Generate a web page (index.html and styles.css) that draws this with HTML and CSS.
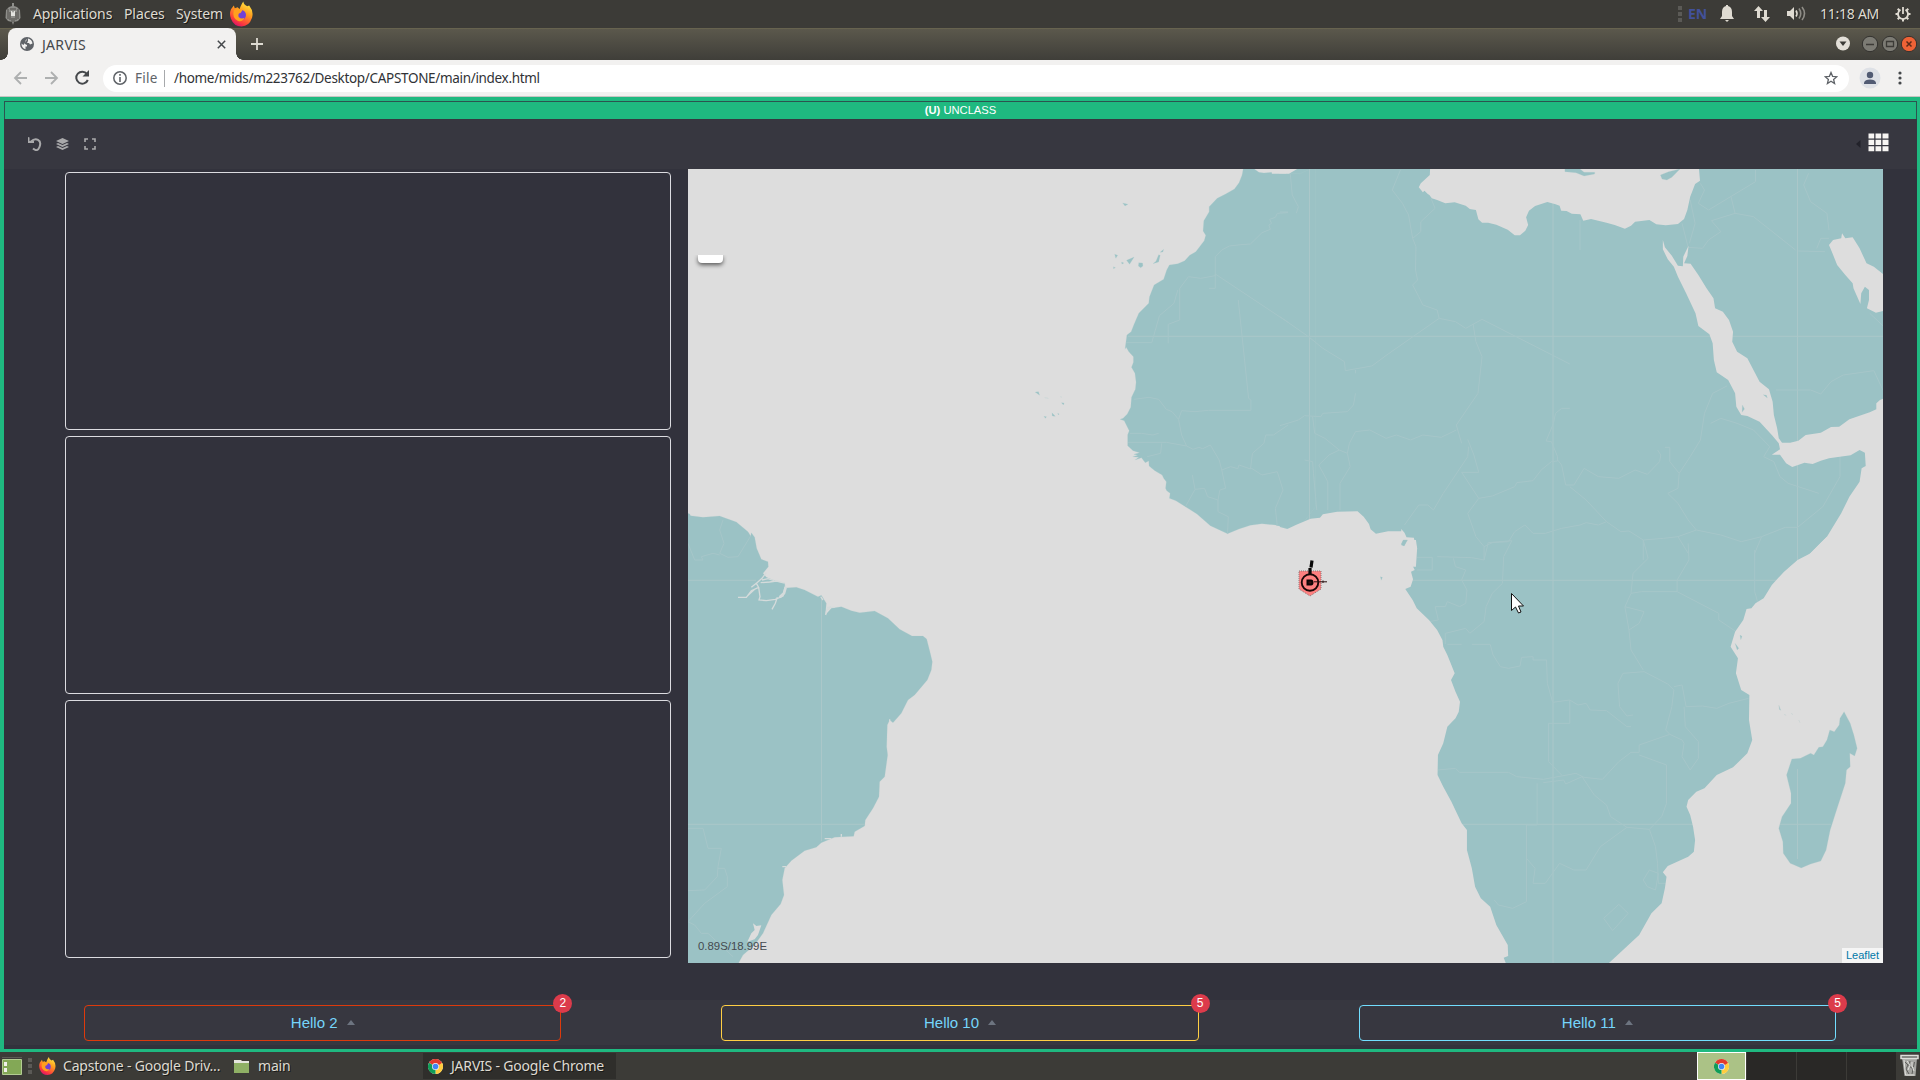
FILE: index.html
```html
<!DOCTYPE html>
<html lang="en">
<head>
<meta charset="utf-8">
<title>JARVIS</title>
<link rel="stylesheet" href="styles.css">
</head>
<body>
<svg width="0" height="0" class="defs">
  <defs>
    <linearGradient id="fox" x1="0.8" y1="0" x2="0.3" y2="1"><stop offset="0" stop-color="#fff14a"/><stop offset=".4" stop-color="#ffa01e"/><stop offset=".8" stop-color="#fc3c3c"/><stop offset="1" stop-color="#d9106d"/></linearGradient>
    <symbol id="firefox" viewBox="0 0 24 26">
      <path fill="url(#fox)" d="M1 8 4 4l1 3 3-1 2 2q2-6 4-8 0 3 4 5l2-1q5 6 3 13-3 9-11 9T1 18Q-1 13 1 8z"/>
      <circle cx="11.5" cy="14" r="5.2" fill="#7141d6"/>
      <path fill="#ffa01e" d="M4 9q4-3 9 0l-2 3q-3 0-2 4 3 3 6 1-2 5-7 3-6-3-4-11z"/>
    </symbol>
    <symbol id="chrome" viewBox="0 0 24 24">
      <circle cx="12" cy="12" r="12" fill="#fff"/>
      <path fill="#e33b2e" d="M12 12 1.600 6A12 12 0 0 1 22.400 6z"/>
      <path fill="#ffcd40" d="M12 12 22.400 6A12 12 0 0 1 12 24z"/>
      <path fill="#109d58" d="M12 12v12A12 12 0 0 1 1.600 6z"/>
      <path fill="#e33b2e" d="M12 6h10.400L17 10z"/>
      <circle cx="12" cy="12" r="5.600" fill="#f3f3f3"/><circle cx="12" cy="12" r="4.500" fill="#4285f4"/>
    </symbol>
  </defs>
</svg>

<div class="panel">
  <svg class="crest" width="16" height="22" viewBox="0 0 16 22"><path fill="#8e8e8a" d="M7 0h2v3l3 1 3 3 .5 8-2.500 3-4 1-1 3-1-3-4-1L.5 15 1 7l3-3 3-1z"/><path d="M3 6v10M13 6v10M5 9v8M11 9v8M7 15v4M9 15v4M5 6h6" stroke="#4e4d49" fill="none"/><path d="M6 8h1l1 2 1-2h1v5H6z" fill="#e4e4e0"/></svg>
  <span class="m1">Applications</span><span class="m2">Places</span><span class="m3">System</span>
  <svg class="ff" width="23" height="26"><use href="#firefox"/></svg>
  <div class="tray">
    <i class="grip"></i><b class="lang">EN</b>
    <svg class="bell" width="14" height="17" viewBox="0 0 14 17"><path fill="#dfdbd2" d="M6 1V0h2v1q4 1 4 6v4l2 3H0l2-3V7q0-5 4-6zM5 15h4l-2 2z"/></svg>
    <svg class="net" width="16" height="16" viewBox="0 0 16 16"><path fill="#dfdbd2" d="M4.500 0 9 5H6v7H3V5H0zM11.500 16 7 11h3V4h3v7h3z"/></svg>
    <svg class="vol" width="19" height="15" viewBox="0 0 19 15"><path fill="#dfdbd2" d="M0 5h3l4-4v13l-4-4H0z"/><path fill="none" stroke="#dfdbd2" stroke-width="1.600" d="M9 4.500q2 3 0 6"/><path fill="none" stroke="#8f8d87" stroke-width="1.600" d="M12 2.500q3.500 5 0 10M15 1q5 6.500 0 13"/></svg>
    <span class="clock">11:18 AM</span>
    <svg class="gear" width="16" height="16" viewBox="0 0 16 16"><path stroke="#dfdbd2" stroke-width="2" d="M12.500 8h3M.500 8h3M8 12.500v3M2.700 2.700l2 2M11.300 11.300l2 2M13.300 2.700l-2 2M4.700 11.300l-2 2"/><path fill="none" stroke="#dfdbd2" stroke-width="1.800" d="M5.500 3.700a5 5 0 1 0 5 0"/><path stroke="#dfdbd2" stroke-width="1.800" d="M8 1v7"/></svg>
  </div>
</div>

<div class="tabs">
  <div class="tab">
    <svg width="14" height="14" viewBox="0 0 14 14"><circle cx="7" cy="7" r="7" fill="#5f6368"/><path fill="#f2f1f0" d="M7.500 1.500 5.500 3.500v2L4 6.500 7 8v1.500H5.500v2.800Q1.500 11 1.500 7l-.1-.6 2 1.600L5 6M8 1.500q4 1 4.500 5L10 7.500 9 6H7l1-2z"/></svg>
    <span>JARVIS</span>
    <svg class="x" width="9" height="9" viewBox="0 0 9 9"><path stroke="#45484b" stroke-width="1.500" d="m.8.8 7.400 7.400m0-7.400L.8 8.200"/></svg>
  </div>
  <svg class="plus" width="12" height="12"><path stroke="#dedbd2" stroke-width="1.800" d="M6 0v12M0 6h12"/></svg>
  <svg class="wins" width="82" height="18" viewBox="0 0 82 18">
    <circle cx="7" cy="8.500" r="7" fill="#e3dfd8"/><path d="M3.500 6.500h7L7 11z" fill="#3c3b37"/>
    <circle cx="34" cy="9" r="7.700" fill="#7c7b74" stroke="#32312e"/><path stroke="#3c3b37" stroke-width="1.500" d="M30 9.500h8"/>
    <circle cx="54" cy="9" r="7.700" fill="#7c7b74" stroke="#32312e"/><path fill="none" stroke="#3c3b37" stroke-width="1.300" d="M50.500 6.500h7v5h-7z"/>
    <circle cx="73" cy="9" r="7.700" fill="#ee6236" stroke="#32312e"/><path stroke="#5d2a18" stroke-width="1.500" d="m70.500 6.500 5 5m0-5-5 5"/>
  </svg>
</div>

<div class="bar">
  <svg width="90" height="36" viewBox="0 0 90 36" fill="none" stroke-width="1.800"><path stroke="#aeb0b0" d="M27 18H15m6-6-6 6 6 6M45 18h12m-6-6 6 6-6 6"/><path stroke="#45484b" stroke-width="2" d="M87 14a6 6 0 1 0 .8 6"/><path fill="#45484b" d="M89 10v6.500h-6.500z"/></svg>
  <div class="url">
    <svg width="14" height="14" viewBox="0 0 14 14"><circle cx="7" cy="7" r="6.200" fill="none" stroke="#5f6368" stroke-width="1.500"/><path stroke="#5f6368" stroke-width="1.600" d="M7 6v5M7 3v1.700"/></svg>
    <span class="file">File</span><span class="path">/home/mids/m223762/Desktop/CAPSTONE/main/index.html</span>
    <svg class="star" width="14" height="14" viewBox="0 0 14 14"><path fill="none" stroke="#5f6368" stroke-width="1.300" d="m7 1.500 1.600 3.800 4.200.4-3.200 2.700 1 4.100L7 10.300l-3.600 2.200 1-4.100L1.200 5.700l4.200-.4z"/></svg>
  </div>
  <svg class="user" width="22" height="22" viewBox="0 0 22 22"><circle cx="11" cy="11" r="10.500" fill="#dee1e6"/><circle cx="11" cy="8" r="3.200" fill="#515b73"/><path fill="#515b73" d="M5 17v-1.500q1-3 6-3t6 3V17z"/></svg>
  <svg class="dots" width="4" height="14" fill="#45484b"><circle cx="2" cy="2" r="1.600"/><circle cx="2" cy="7" r="1.600"/><circle cx="2" cy="12" r="1.600"/></svg>
</div>

<div class="page">
  <div class="banner"><b>(U)</b> UNCLASS</div>
  <div class="tools">
    <svg width="72" height="14" viewBox="0 0 72 14">
      <path fill="none" stroke="#a9a9ab" stroke-width="2" d="M3 4.500Q6.500 1 10 2.800T11.500 10 5 11.500"/><path fill="#a9a9ab" d="M0 0 1.500.500v3.500H6V6H0z"/>
      <path fill="#a9a9ab" d="m34.500 1 6.500 3-6.500 3L28 4zM28 7l2-1 4.500 2L39 6l2 1-6.500 3zM28 10l2-1 4.500 2L39 9l2 1-6.500 3z"/>
      <path fill="none" stroke="#a9a9ab" stroke-width="1.600" d="M57 5V2h3M64 2h3v3M67 9v3h-3M60 12h-3V9"/>
    </svg>
    <svg class="apps" width="34" height="20" viewBox="0 0 34 20"><path fill="#22222a" d="M4.500 7v8L0 11z"/><path fill="#f7f5f3" d="M12.500.500h5.700v5h-5.700zM19.500.500h5.700v5h-5.700zM26.500.500h6v5h-6zM12.500 6.800h5.700v5.200h-5.700zM19.500 6.800h5.700v5.200h-5.700zM26.500 6.800h6v5.200h-6zM12.500 13.200h5.700v5h-5.700zM19.500 13.200h5.700v5h-5.700zM26.500 13.200h6v5h-6z"/></svg>
  </div>
  <div class="main">
    <div class="cards"><div class="card"></div><div class="card"></div><div class="card"></div></div>
    <div class="map">
      <svg width="1195" height="794" viewBox="0 0 1195 794">
        <path class="plain" d="M598 10V0H1195V794H592V300z"/>
        <g class="land">
          <g transform="translate(0 -9) scale(.38265 .33333)">
            <path d="M1452 20 1448 45 1440 68 1428 87 1405 102 1383 115 1362 140 1362 155 1348 182 1346 213 1353 226 1349 242 1327 275 1311 286 1298 302 1280 311 1258 315 1251 330 1243 358 1218 375 1206 410 1204 430 1178 460 1166 492 1158 515 1147 525 1142 568 1145 562 1152 575 1164 590 1164 607 1159 622 1168 640 1171 667 1169 688 1159 712 1157 742 1148 762 1137 775 1129 778 1140 782 1153 812 1149 824 1149 857 1163 872 1180 878 1165 883 1175 886 1162 890 1178 892 1168 900 1185 893 1195 908 1204 903 1205 918 1212 925 1220 932 1239 945 1243 955 1250 965 1248 985 1251 992 1260 1000 1258 1015 1275 1022 1300 1040 1330 1062 1365 1097 1410 1121 1440 1107 1470 1096 1500 1091 1535 1095 1568 1106 1600 1100 1640 1040 1640 20 1600 41 1545 40 1540 30 1537 36 1505 39 1492 37 1480 27V20z"/>
            <path d="m1136 129 14 4-8 5zM1115 283l8 3-5 9zM1112 320l5 3-5 3zM1133 306l6 3-5 4zM1146 301l20-10-12 22zM1178 308l10 1 1 9-6 5-6-5zM1215 311l8-7 7-20 4 2-4 20zM1234 277l9-9-2 8zM907 696l9-1 3 11zM932 713l10 2zM976 728l7 1-2 6zM951 758l9 11-8-1zM930 769l7 1-3 5zM966 760l4 2-2 3zM974 708l2 5z"/>
          </g>
          <path transform="translate(0 331) scale(.33333)" d="M-5 38 5 42 8 47 45 52 95 48 145 66 180 95 188 108 190 98 200 112 206 145 220 178 240 185 241 200 225 220 235 232 262 243 290 250 292 264 325 262 350 270 390 290 400 286 415 310 412 345 430 325 460 320 490 332 515 338 560 333 600 355 635 388 672 408 705 408 716 417 727 460 733 485 730 510 718 540 680 585 660 600 640 640 615 668 605 660 598 675 596 740 599 765 590 830 575 845 573 890 555 925 532 960 530 978 500 995 497 1009 440 1012 400 1028 385 1042 350 1052 310 1082 290 1105 283 1140 288 1185 278 1212 250 1245 225 1300 200 1335 165 1365 150 1392H-5z"/>
        </g>
        <g class="grid"><path d="M133.500 428V672M0 411.300H68M0 655.300H177M440 167.300H1195M621.500 0V360M865 0V794M1109.500 0V794M700 411.300H1100M740 655.300H1160"/></g>
        <g class="borders">
          <path transform="translate(0 -9) scale(.38265 .33333)" d="M1568 158 1540 160 1535 172 1520 178 1525 190 1518 195 1522 208 1500 218 1470 252 1445 254 1415 258 1395 270 1378 290V385H1362M1568 487 1378 342 1378 347 1340 355 1308 350 1285 385V480L1255 493V550M1280 390 1270 430 1232 467 1212 548H1145M1438 420 1465 715 1471 720V751H1360L1325 755 1290 752 1282 778 1265 755 1250 748 1230 718 1205 712 1165 718M1282 778 1290 825 1303 858 1250 847H1150M1155 820 1185 820 1215 825 1230 820M1303 858 1320 868 1335 862 1345 866 1365 855 1388 900 1395 930 1418 920 1437 926 1440 915 1470 927 1475 880 1505 850 1510 825 1530 825 1568 795M1395 930 1405 985 1390 990 1385 1020 1358 1010 1350 985 1325 988 1318 945M1238 850 1235 880 1200 890M1385 1020 1385 1055 1412 1070 1410 1120M1325 988 1300 1040M1470 923 1500 945 1540 935 1555 990 1535 1045 1540 1098"/>
          <path transform="translate(592 -9) scale(.40816 .33333)" d="M0 470 72 532 105 565 158 605 160 632 225 618 265 582 390 475 385 450 350 435 340 410 325 375 337 360 332 330 333 260 325 235 315 165 300 130 275 90 295 30M325 235 345 215 345 185 380 145 370 115M390 475 430 485 455 505 495 478 710 612M473 492 480 545 495 590 485 700 432 795 445 850M460 838 475 885 487 937H445L487 1015M462 860 460 890 430 945 400 1000 376 1050 362 1035 340 1035 305 1095M185 630V640M185 700 180 735 165 755 105 760 100 770 60 767 45 780 0 797M80 770 85 820 110 835 145 870 165 880 170 850 185 815 220 810 260 835 285 825 320 840 350 825 395 832 432 810M145 870 120 885 95 915 117 965V1050M165 880 172 920 147 970V1050M60 900 80 905 82 940 90 1050M487 1015 460 1060 480 1130 500 1160V1200M487 1015 520 1008 575 980 580 968 620 962 640 930 665 905 680 903 680 890 665 845 652 843 670 790 675 760 690 745H710M680 900 690 915 700 975 720 975 745 925 780 950 830 955 870 930 900 943 930 905 933 885 925 870M943 862 955 862V905L978 940 975 985 950 1000 975 1030 1000 1080 1020 1110 1080 1125 1130 1145 1180 1130 1238 1102H1268L1330 1040 1372 950V885M978 940 1005 890 1030 840 1040 760 1060 700 1095 678M1055 790 1080 775 1120 790 1160 810 1200 860 1185 890 1210 905 1225 950 1245 970 1320 1000M710 980 750 1020 800 1085 780 1095 750 1088 735 1095 690 1105 650 1120 620 1120 600 1095 575 1115 560 1145 520 1148 500 1160M800 1085 835 1115 855 1113 890 1140 940 1135 975 1130 1020 1110M890 1140 890 1200M975 1130 1000 1180M1180 1130 1163 1180V1200M735 180V270M985 190 1000 262 1035 265 1050 240 1080 215 1057 182 1115 160 1105 110M1005 120 1017 190 1003 250M1115 160 1160 170 1263 270M1270 273 1335 275M1315 265 1325 235 1345 235M1030 70 1040 90 1025 130 1050 150 1165 65V30M1295 40 1283 75 1300 125 1340 160 1345 210M1445 460 1477 497M1215 690 1300 690 1325 702 1350 665 1380 645 1455 632 1477 690M25 40 30 105 45 140 40 160M20 156H0"/>
          <path transform="translate(592 371) scale(.40816 .33333)" d="M335 52H373V90H335M385 50 470 53 500 60 510 8 568 2M568 2 548 50 545 130 520 160 505 200 500 245 465 280 455 265 405 280V312M425 55 430 80 455 90 445 120 458 150 455 190 440 200 410 185 405 200 380 200 388 240 365 245M410 313H445M470 313H515L522 345 540 380 560 385 588 378 592 352 620 350V360H653L655 430 668 487 710 480 730 495 750 490 760 510 800 512 850 560H860M710 480V550H658V665L690 705M386 690 430 685 440 697H560L580 710 645 718 725 700 745 712 790 718 830 665 860 637 880 637 880 615 955 583 945 570 960 500 965 450 950 432 892 395 840 400 828 430 832 500 850 528 865 525M890 0 902 55 865 100 860 160 845 200 855 270 860 330 890 390M1000 10 1002 60 973 120V155L1075 220V240L1115 273M860 160 885 155H973M855 270 880 250 892 215 845 200M965 440 985 435 995 500 1035 498 1070 505 1100 490 1148 475M990 500 993 560 1025 605V655L1005 690 985 650 990 610 985 600 955 583M880 645 947 675V790L935 830 905 868 850 862 810 830 800 795 770 765 740 710M645 728 695 720 700 732 740 710M630 730V855H604V1085L570 1105 535 1095 525 1080M604 955 625 985 620 1030H650L685 970 720 990 750 990 785 920 850 862M905 868 920 920 925 970 927 1030H945M905 990 890 1020 900 1040 920 1050 927 1000zM830 1093 853 1120 815 1172 793 1135zM1163 30V155L1170 185"/>
          <path transform="translate(0 331) scale(.33333)" d="M105 60 95 90 108 130 95 160 120 172 150 170 188 108M0 130 20 180H45L40 170 75 160 95 165M0 985H45L60 1045 100 1045 90 1100 88 1130 50 1170 0 1172M90 1105 110 1105 118 1130 118 1160 50 1210 0 1265 20 1275 40 1300 60 1300 135 1370"/>
        </g>
        <g class="sea">
          <g transform="translate(592 -9) scale(.40816 .33333)">
            <path d="M-20 20V41H22L42 27V20zM368 20 367 45 345 70 340 82 350 97 354 92 362 102 366 105 372 115 385 120 405 130 428 127 455 137 465 147 480 150 486 178 495 188 510 188 530 194 558 209 575 226 588 226 601 212 608 195 603 172 610 152 625 138 655 126 675 133 685 137 689 152 702 153 715 161 736 163 743 182 762 177 800 188 820 195 845 206 860 197 870 185 905 180 922 193 945 196 975 192 990 177 998 150 1005 110 1017 72 1029 62 1026 20z"/>
            <path d="M938 240 943 262 960 287 975 317 987 319 988 290 1001 257 998 288 990 310 1006 311 1025 345 1045 385 1062 415 1066 445 1085 455 1100 480 1110 515 1108 545 1120 575 1145 595 1160 630 1175 665 1198 688 1207 725 1210 765 1218 805 1222 835 1230 848 1250 848 1270 842 1288 825 1325 818 1350 801 1370 800 1395 778 1445 757 1461 748 1461 730 1470 720 1480 715V1220H1250L1275 1200 1295 1185 1340 1130 1375 1060 1395 1010 1420 965 1425 925 1435 918 1433 878 1420 870 1398 886 1345 895 1325 902 1305 912 1285 908 1255 921 1240 910 1225 884 1205 884 1225 868 1222 850 1205 825 1175 785 1145 768 1130 765 1118 740 1115 700 1098 660 1070 637 1063 600 1060 550 1052 523 1025 498 1018 460 995 400 975 350 965 320 950 298 938 268z"/>
            <path d="M1345 255 1355 240 1375 235 1377 220 1385 235 1403 232 1420 265 1437 310 1455 320 1480 345V452L1460 458 1438 445 1443 420 1443 390 1433 380 1424 400 1422 432 1405 385 1403 370 1385 345 1365 315 1352 275z"/>
            <path d="M-20 1095 0 1101 18 1107 40 1094 75 1076 98 1073 105 1063 140 1055 190 1054 205 1070 218 1092 222 1108 235 1121 265 1114 297 1114 297 1107 305 1118 310 1132 328 1133 330 1145 336 1165 333 1220H-20z"/>
          </g>
          <g transform="translate(592 371) scale(.40816 .33333)">
            <path d="M-20 0H333L336 25 328 60 322 70 330 90 321 95 326 118 320 140 307 147 325 180 335 205 365 240 385 270 398 300 400 320 410 345 428 400 419 420 430 455 441 485 438 515 430 535 410 560 400 610 387 645 386 705 400 740 420 785 445 850 458 870 458 930 470 985 478 1040 492 1075 515 1100 530 1155 558 1215 559 1248 548 1253 555 1275H-20z"/>
            <path d="M1480-10H1340L1325 8 1300 40 1268 60 1235 95 1205 135 1185 175 1165 190 1155 205 1143 207 1135 240 1115 275 1104 320 1122 355 1117 400 1130 450 1150 465 1149 540 1157 600 1145 640 1110 682 1070 705 1040 745 1020 755 1000 780 996 800 1005 825 1012 860 1017 900 1014 935 1000 950 950 978 938 997 947 1010 943 1045 935 1090 910 1120 880 1185 845 1225 805 1270 800 1290H1480z"/>
          </g>
          <path transform="translate(0 331) scale(.33333)" d="M195 1270 205 1278 220 1276 210 1305 200 1318 178 1325 190 1300 200 1290z"/>
        </g>
        <g class="land">
          <g transform="translate(592 371) scale(.40816 .33333)">
            <path d="M1382 515 1397 550 1406 585 1414 625 1408 648 1396 640 1397 680 1388 690 1385 730 1365 805 1348 870 1338 930 1325 963 1300 972 1277 984 1250 970 1233 940 1232 905 1222 865 1230 830 1252 790 1252 760 1241 705 1254 657 1275 655 1300 640 1308 645 1320 622 1330 620 1340 600 1347 570 1358 575 1370 555 1372 535zM302 0 312 0 304 18 297 12zM246 110l5 2-3 9zM1127 285l5 4-3 10zM1115 310l9 15-4 5zM1222 496l5 15-3-2zM1235 523l5 3zM1252 520l5 4zM1271 540l3 8z"/>
          </g>
          <g transform="translate(592 -9) scale(.40816 .33333)">
            <path d="M698 20V35L725 38 745 48 771 42V37H745L735 27V20zM932 45 952 35 980 27 960 52 948 60 936 57zM297 1155 302 1140 312 1140 304 1158zM1184 704l8 2 2 8zM1133 735l5 12-6 10z"/>
          </g>
        </g>
        <g class="grid"><path d="M1109.500 600V690M1092 655.300H1143"/></g>
        <g transform="translate(0 331) scale(.33333)">
          <path class="river" d="M150 292H175L190 272 212 262 205 250 222 235 235 218M178 288 200 268M205 250 190 262M222 240 240 236 258 242M218 248 245 246 265 243 290 249M212 262 216 290 213 300 235 302 262 298 285 288 293 255M268 292 262 310 252 328M398 290 405 300M413 345 418 322 440 322M420 330 428 318M605 658V665M283 1100H295M410 1016H430M460 1002V1010"/>
          <path class="river bay" d="M275 292 288 280 293 262"/>
        </g>
        <g transform="translate(609 388)">
          <path d="M2 14H24V32L13 39 2 32z" fill="#ff8080" stroke="#8d7777" stroke-dasharray="1 1"/>
          <path d="M13 17V11M14 10.500l1-7" fill="none" stroke="#080808" stroke-width="3.200"/>
          <circle cx="13" cy="25.500" r="8.300" fill="#ff8080" stroke="#1a0808" stroke-width="1.900"/>
          <path d="M17 24.800h13M26 23.500v2.500" stroke="#2a1010"/>
          <path d="M10.500 23.500h3.500q1.500 0 1.500 2t-1.500 2h-3.500z" fill="#3a1010" stroke="#0d0404" stroke-width="2"/>
        </g>
        <path d="M823.500 424.500v17l4-3.500 3 6 2.500-1-2.500-6h5z" fill="#fff" stroke="#111"/>
      </svg>
      <i class="ctl"></i>
      <span class="coord">0.89S/18.99E</span><span class="leaflet">Leaflet</span>
    </div>
  </div>
  <div class="foot">
    <div class="col"><div class="btn red">Hello 2<i class="up"></i><span class="badge">2</span></div></div>
    <div class="col"><div class="btn yellow">Hello 10<i class="up"></i><span class="badge">5</span></div></div>
    <div class="col"><div class="btn cyan">Hello 11<i class="up"></i><span class="badge">5</span></div></div>
  </div>
</div>

<div class="taskbar">
  <svg width="36" height="28" viewBox="0 0 36 28"><path fill="#5c5a55" d="M2 5h20v1H2z"/><path fill="#83a856" stroke="#b3cc92" d="M2.500 7.500h19v15h-19z"/><path fill="#f1f1ea" d="M4 10h3v4H4zM4 16h3v4H4z"/><path stroke="#5b5a56" stroke-width="4" stroke-dasharray="4 2" d="M30 6v16"/></svg>
  <svg class="t1" width="17" height="18"><use href="#firefox"/></svg><span class="w1">Capstone - Google Driv...</span>
  <svg width="15" height="13" viewBox="0 0 15 13"><path fill="#e5e5dd" d="M0 0h7l1 1h7v3H0z"/><path fill="#8fb065" d="M0 3h15v10H0z"/></svg><span class="w2">main</span>
  <div class="active"><svg width="15" height="15"><use href="#chrome"/></svg><span>JARVIS - Google Chrome</span></div>
  <div class="spaces"><div class="ws on"><svg width="15" height="15"><use href="#chrome"/></svg></div><div class="ws"></div><div class="ws"></div><div class="ws"></div></div>
  <svg class="trash" width="20" height="24" viewBox="0 0 20 24"><path fill="#a5a5a1" d="M2 4h15l-1.500 18h-11z"/><path fill="#6c6c68" stroke="#dededa" stroke-width="1.500" d="M1 1.500h17v3H1z"/><path stroke="#5f5f5c" fill="none" d="M5 8l3 3-2 4 3 5M10 7l-1 5 4 3-1 5M14.500 8l-1 5"/><path stroke="#e2e2de" fill="none" d="M7 7l3 4-2 5M12 8v4l2 5M4 6l1.500 15h9"/></svg>
</div>
</body>
</html>
```
FILE: styles.css
```css
* { box-sizing: border-box; }
body { margin: 0; width: 1920px; height: 1080px; overflow: hidden; display: flex; flex-direction: column; font-family: "Noto Sans", sans-serif; font-size: 14px; background: #32323c; }
svg { display: block; flex: none; }
span { white-space: nowrap; }
.defs { position: absolute; }

.panel { height: 28px; flex: none; background: #3c3b37; color: #dfdbd2; display: flex; align-items: center; padding: 0 0 1px 5px; text-shadow: 1px 1px #1a1a18; }
.panel > span { letter-spacing: -.1px; }
.m1 { width: 91px; margin-left: 12px; }
.m2 { width: 52px; }
.m3 { width: 54px; }
.tray { margin-left: auto; display: flex; align-items: center; padding-right: 9px; }
.grip { width: 4px; height: 16px; background: repeating-linear-gradient(#5b5a56 0 4px, transparent 4px 6px); margin-right: 6px; }
.lang { color: #42519a; width: 32px; text-shadow: none; }
.bell { margin-right: 20px; }
.net { margin-right: 17px; }
.vol { margin-right: 14px; }
.clock { width: 75px; letter-spacing: -.25px; }

.tabs { height: 32px; flex: none; background: linear-gradient(#5b584c, #3f3e39); border-top: 1px solid #67634f; display: flex; align-items: center; padding: 0 0 1px 8px; }
.tab { position: relative; width: 228px; height: 32px; background: #f2f1f0; border-radius: 8px 8px 0 0; display: flex; align-items: center; padding: 0 10px 0 12px; color: #45484b; }
.tab::before, .tab::after { content: ""; position: absolute; bottom: 0; width: 7px; height: 7px; }
.tab::before { left: -7px; background: radial-gradient(circle at 0 0, transparent 6.500px, #f2f1f0 7px); }
.tab::after { right: -7px; background: radial-gradient(circle at 100% 0, transparent 6.500px, #f2f1f0 7px); }
.tab span { margin-left: 8px; letter-spacing: .3px; }
.tab .x { margin-left: auto; }
.plus { margin-left: 15px; }
.wins { margin: 0 2px 0 auto; }

.bar { height: 37px; flex: none; background: #f2f1f0; border-bottom: 1px solid #c8c6c3; display: flex; align-items: center; }
.url { margin-left: 13px; width: 1746px; height: 27px; border-radius: 14px; background: #fff; display: flex; align-items: center; padding: 0 11px 0 10px; color: #303236; font-size: 13.500px; }
.file { margin-left: 8px; width: 30px; height: 17px; line-height: 16px; letter-spacing: .3px; color: #606469; border-right: 1px solid #a7a9ac; }
.path { margin: 0 0 1px 9px; letter-spacing: -.32px; }
.star { margin-left: auto; }
.user { margin-left: 10px; }
.dots { margin-left: 17px; }

.page { height: 955px; flex: none; border: solid #1fb980; border-width: 4px 3px 3px 4px; background: #32323c; font-family: "Liberation Sans", Arial, sans-serif; display: flex; flex-direction: column; }
.banner { height: 18px; flex: none; background: #1fb980; border: solid #2c5450; border-width: 1px 1px 0; color: #fff; font-size: 11.200px; line-height: 16px; text-align: center; }
.tools { height: 50px; flex: none; background: #373740; display: flex; align-items: center; justify-content: space-between; padding: 0 27px 0 24px; }
.apps { margin-bottom: 3px; }
.main { height: 831px; flex: none; display: flex; }
.cards { width: 606px; margin: 3px 17px 0 61px; display: flex; flex-direction: column; gap: 6px; }
.card { height: 258px; flex: none; border: 1px solid #dcdce0; border-radius: 4px; }
.map { position: relative; width: 1195px; height: 794px; background: #ddd; overflow: hidden; }
.land, .plain { fill: #9bc2c5; }
.land { stroke: #b3cdce; stroke-width: .6px; stroke-linejoin: round; }
.plain { stroke: none; }
.sea { fill: #ddd; }
.grid, .borders { fill: none; stroke: #abc7c9; }
.borders { stroke: #a6c6c9; stroke-linejoin: round; }
.borders path { stroke-width: 1px; vector-effect: non-scaling-stroke; }
.river { fill: none; stroke: #d5dbdb; stroke-width: 4px; }
.bay { stroke-width: 8px; }
.ctl { position: absolute; left: 10px; top: 86px; width: 25px; height: 8px; background: #fff; border-radius: 0 0 4px 4px; box-shadow: 0 2px 4px rgba(0, 0, 0, .6); clip-path: inset(0 -6px -8px); }
.coord { position: absolute; left: 10px; bottom: 11.500px; font-size: 11.400px; color: #454a50; }
.leaflet { position: absolute; right: 0; bottom: 0; width: 41px; height: 15px; background: #f5f5f5; color: #0078a8; font-size: 11px; line-height: 15px; text-align: center; }

.foot { height: 45px; flex: none; background: #373740; display: flex; padding-right: 1px; }
.col { flex: 1; padding: 5px 80px 0; }
.btn { position: relative; height: 36px; border: 1px solid; border-radius: 4px; font-size: 15px; display: flex; align-items: center; justify-content: center; gap: 9px; padding-bottom: 2px; color: #75d5fb; }
.red { border-color: #dd3a0c; }
.yellow { border-color: #ffcf44; }
.cyan { border-color: #72deff; }
.up { border: solid transparent; border-width: 0 4.500px 5px; border-bottom-color: #6d7480; }
.badge { position: absolute; right: -12px; top: -12px; width: 19px; height: 19px; border-radius: 50%; background: #dc3b4b; color: #fff; font-size: 12px; line-height: 19px; text-align: center; }

.taskbar { height: 28px; flex: none; background: #3c3b37; color: #dfdbd2; display: flex; align-items: center; font-size: 14px; letter-spacing: -.2px; text-shadow: 1px 1px #1a1a18; }
.taskbar span { margin-bottom: 1px; }
.t1 { margin-left: 3px; }
.w1 { margin-left: 7px; width: 171px; }
.w2 { margin-left: 9px; width: 165px; }
.active { width: 193px; height: 26px; background: #2f2e2b; display: flex; align-items: center; gap: 8px; padding-left: 5px; }
.spaces { margin-left: auto; display: flex; gap: 1px; }
.ws { width: 49px; height: 28px; background: #292826; }
.ws.on { background: #abc286; border: 1px solid #fff; display: flex; align-items: center; justify-content: center; }
.trash { margin-left: 4px; }
```
